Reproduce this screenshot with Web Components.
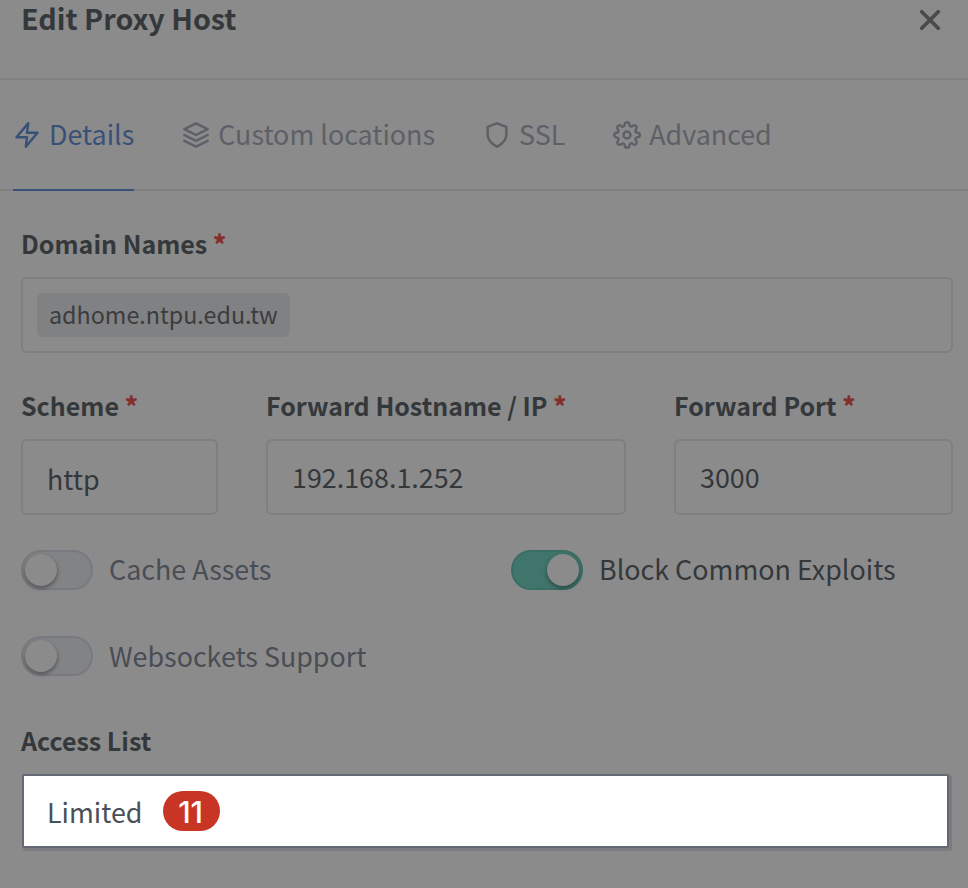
<!DOCTYPE html>
<html lang="en">
<head>
<meta charset="utf-8">
<title>Edit Proxy Host</title>
<style>
html,body{margin:0}
body{background:#8b8b8b;color:#34383b;font-family:"Noto Sans CJK TC","Noto Sans",sans-serif;font-size:26.87px}
</style>
</head>
<body>
<proxy-dialog></proxy-dialog>
<script>
const define=(name,html,init)=>customElements.define(name,class extends HTMLElement{
  connectedCallback(){
    if(this.shadowRoot)return;
    const t=document.createElement('template');
    t.innerHTML=html;
    this.attachShadow({mode:'open'}).append(t.content.cloneNode(true));
    if(init)init(this,this.shadowRoot);
  }
});

const icons={
  zap:'<polygon points="13 2 3 14 12 14 11 22 21 10 12 10 13 2"/>',
  layers:'<polygon points="12 2 2 7 12 12 22 7 12 2"/><polyline points="2 17 12 22 22 17"/><polyline points="2 12 12 17 22 12"/>',
  shield:'<path d="M12 22s8-4 8-10V5l-8-3-8 3v7c0 6 8 10 8 10z"/>',
  settings:'<circle cx="12" cy="12" r="3"/><path d="M19.4 15a1.65 1.65 0 0 0 .33 1.82l.06.06a2 2 0 0 1 0 2.83 2 2 0 0 1-2.83 0l-.06-.06a1.65 1.65 0 0 0-1.82-.33 1.65 1.65 0 0 0-1 1.51V21a2 2 0 0 1-2 2 2 2 0 0 1-2-2v-.09A1.65 1.65 0 0 0 9 19.4a1.65 1.65 0 0 0-1.82.33l-.06.06a2 2 0 0 1-2.83 0 2 2 0 0 1 0-2.83l.06-.06a1.65 1.65 0 0 0 .33-1.82 1.65 1.65 0 0 0-1.51-1H3a2 2 0 0 1-2-2 2 2 0 0 1 2-2h.09A1.65 1.65 0 0 0 4.6 9a1.65 1.65 0 0 0-.33-1.82l-.06-.06a2 2 0 0 1 0-2.83 2 2 0 0 1 2.83 0l.06.06a1.65 1.65 0 0 0 1.82.33H9a1.65 1.65 0 0 0 1-1.51V3a2 2 0 0 1 2-2 2 2 0 0 1 2 2v.09a1.65 1.65 0 0 0 1 1.51 1.65 1.65 0 0 0 1.82-.33l.06-.06a2 2 0 0 1 2.83 0 2 2 0 0 1 0 2.83l-.06.06a1.65 1.65 0 0 0-.33 1.82V9a1.65 1.65 0 0 0 1.51 1H21a2 2 0 0 1 2 2 2 2 0 0 1-2 2h-.09a1.65 1.65 0 0 0-1.51 1z"/>',
  close:'<path d="M4.9 4.9 19.1 19.1M19.1 4.9 4.9 19.1"/>'
};

define('ui-icon',`<style>
:host{display:block;width:28px;height:28px;flex:none}
svg{display:block;width:100%;height:100%;fill:none;stroke:currentColor;stroke-width:var(--stroke,2);stroke-linecap:round;stroke-linejoin:round;overflow:visible}
</style><svg viewBox="0 0 24 24"></svg>`,(el,root)=>{
  root.querySelector('svg').innerHTML=icons[el.getAttribute('name')];
});

define('dialog-header',`<style>
:host{display:flex;box-sizing:border-box;height:80px;padding:0 24px 0 21px;align-items:flex-start;justify-content:space-between;border-bottom:2px solid #828282;font-weight:700;font-size:28.7px;line-height:36px}
ui-icon{color:#4a4a4a;--stroke:3.2;margin-top:6px}
</style><slot></slot><ui-icon name="close"></ui-icon>`);

define('tab-item',`<style>
:host{display:flex;box-sizing:border-box;height:111px;align-items:center;gap:8px;color:#5d6066;border-bottom:2px solid transparent;line-height:38px;white-space:nowrap}
:host([active]){color:#395078;border-color:#395078}
span{padding-bottom:2px}
ui-icon{margin-top:1px;--stroke:2.1}
</style><span><slot></slot></span>`,(el,root)=>{
  const icon=document.createElement('ui-icon');
  icon.setAttribute('name',el.getAttribute('icon'));
  root.querySelector('span').before(icon);
});

define('tab-bar',`<style>
:host{display:flex;height:111px;padding-left:13px;gap:48px;background:linear-gradient(#808080,#808080) 0 100%/100% 2px no-repeat}
</style><slot></slot>`);

define('form-field',`<style>
:host{display:block;min-width:0}
.label{height:52px;line-height:36px;font-size:25px;font-weight:700;white-space:nowrap}
b{color:#832f2b}
.box{box-sizing:border-box;height:76px;border:2px solid #7e7e83;border-radius:6px;display:flex;align-items:center;padding:var(--pad,0 24px);line-height:40px}
:host([highlight]) .box{margin:0 4px 0 1px;border-color:#656875;border-radius:2px;background:#fff;color:#495057;box-shadow:2px 2px 1px 1px #7b7b80;height:74px;padding:2px 24px 0 23px}
</style><div class="label"><span></span></div><div class="box"><slot></slot></div>`,(el,root)=>{
  const s=root.querySelector('span');
  s.textContent=el.getAttribute('label');
  if(el.hasAttribute('required')){
    const star=document.createElement('b');
    star.textContent=' *';
    s.append(star);
  }
});

define('domain-chip',`<style>
:host{display:flex;align-items:center;box-sizing:border-box;height:44px;border-radius:6px;background:#808183;color:#3c3c3d;padding:0 12px 2px;font-size:23.3px}
</style><slot></slot>`);

define('count-badge',`<style>
:host{display:flex;align-items:center;justify-content:center;box-sizing:border-box;width:57px;height:40px;padding:2px 2px 0 0;border-radius:20px;background:#c93524;color:#fff;margin:-2px 0 0 20.6px;font:500 30px/38px Inter,sans-serif}
</style><slot></slot>`);

define('toggle-switch',`<style>
:host{display:flex;align-items:center;height:40px;gap:16px;color:#494d54;line-height:38px;white-space:nowrap}
:host([on]){color:#34383b}
span{margin-top:var(--drop,-2px)}
i{display:block;box-sizing:border-box;width:72px;height:40px;border:2px solid #777a7f;border-radius:20px;background:#818385;padding:2px}
i::after{content:"";display:block;width:32px;height:32px;border-radius:50%;background:#8b8b8b;box-shadow:0 2px 4px rgba(0,0,0,.4)}
:host([on]) i{background:#40756c;border-color:#3b6d65}
:host([on]) i::after{margin-left:32px}
</style><i></i><span><slot></slot></span>`);

define('proxy-dialog',`<style>
:host{display:block;width:968px;height:888px}
main{display:flex;flex-direction:column;padding:34px 15px 0 21px}
.row{display:grid;grid-template-columns:197px 360px 279px;justify-content:space-between;margin-top:34px;margin-bottom:35px}
.sw{display:grid;grid-template-columns:490px 1fr;row-gap:46px;margin-bottom:46px}
</style>
<dialog-header><span>Edit Proxy Host</span></dialog-header>
<tab-bar>
<tab-item icon="zap" active>Details</tab-item>
<tab-item icon="layers">Custom locations</tab-item>
<tab-item icon="shield">SSL</tab-item>
<tab-item icon="settings">Advanced</tab-item>
</tab-bar>
<main>
<form-field label="Domain Names" required style="--pad:0 14px"><domain-chip>adhome.ntpu.edu.tw</domain-chip></form-field>
<div class="row">
<form-field label="Scheme" required style="--pad:3px 24px 0"><span>http</span></form-field>
<form-field label="Forward Hostname / IP" required><span>192.168.1.252</span></form-field>
<form-field label="Forward Port" required><span>3000</span></form-field>
</div>
<div class="sw">
<toggle-switch>Cache Assets</toggle-switch>
<toggle-switch on>Block Common Exploits</toggle-switch>
<toggle-switch style="--drop:0px">Websockets Support</toggle-switch>
</div>
<form-field label="Access List" highlight><span>Limited</span><count-badge>11</count-badge></form-field>
</main>`);
</script>
</body>
</html>
